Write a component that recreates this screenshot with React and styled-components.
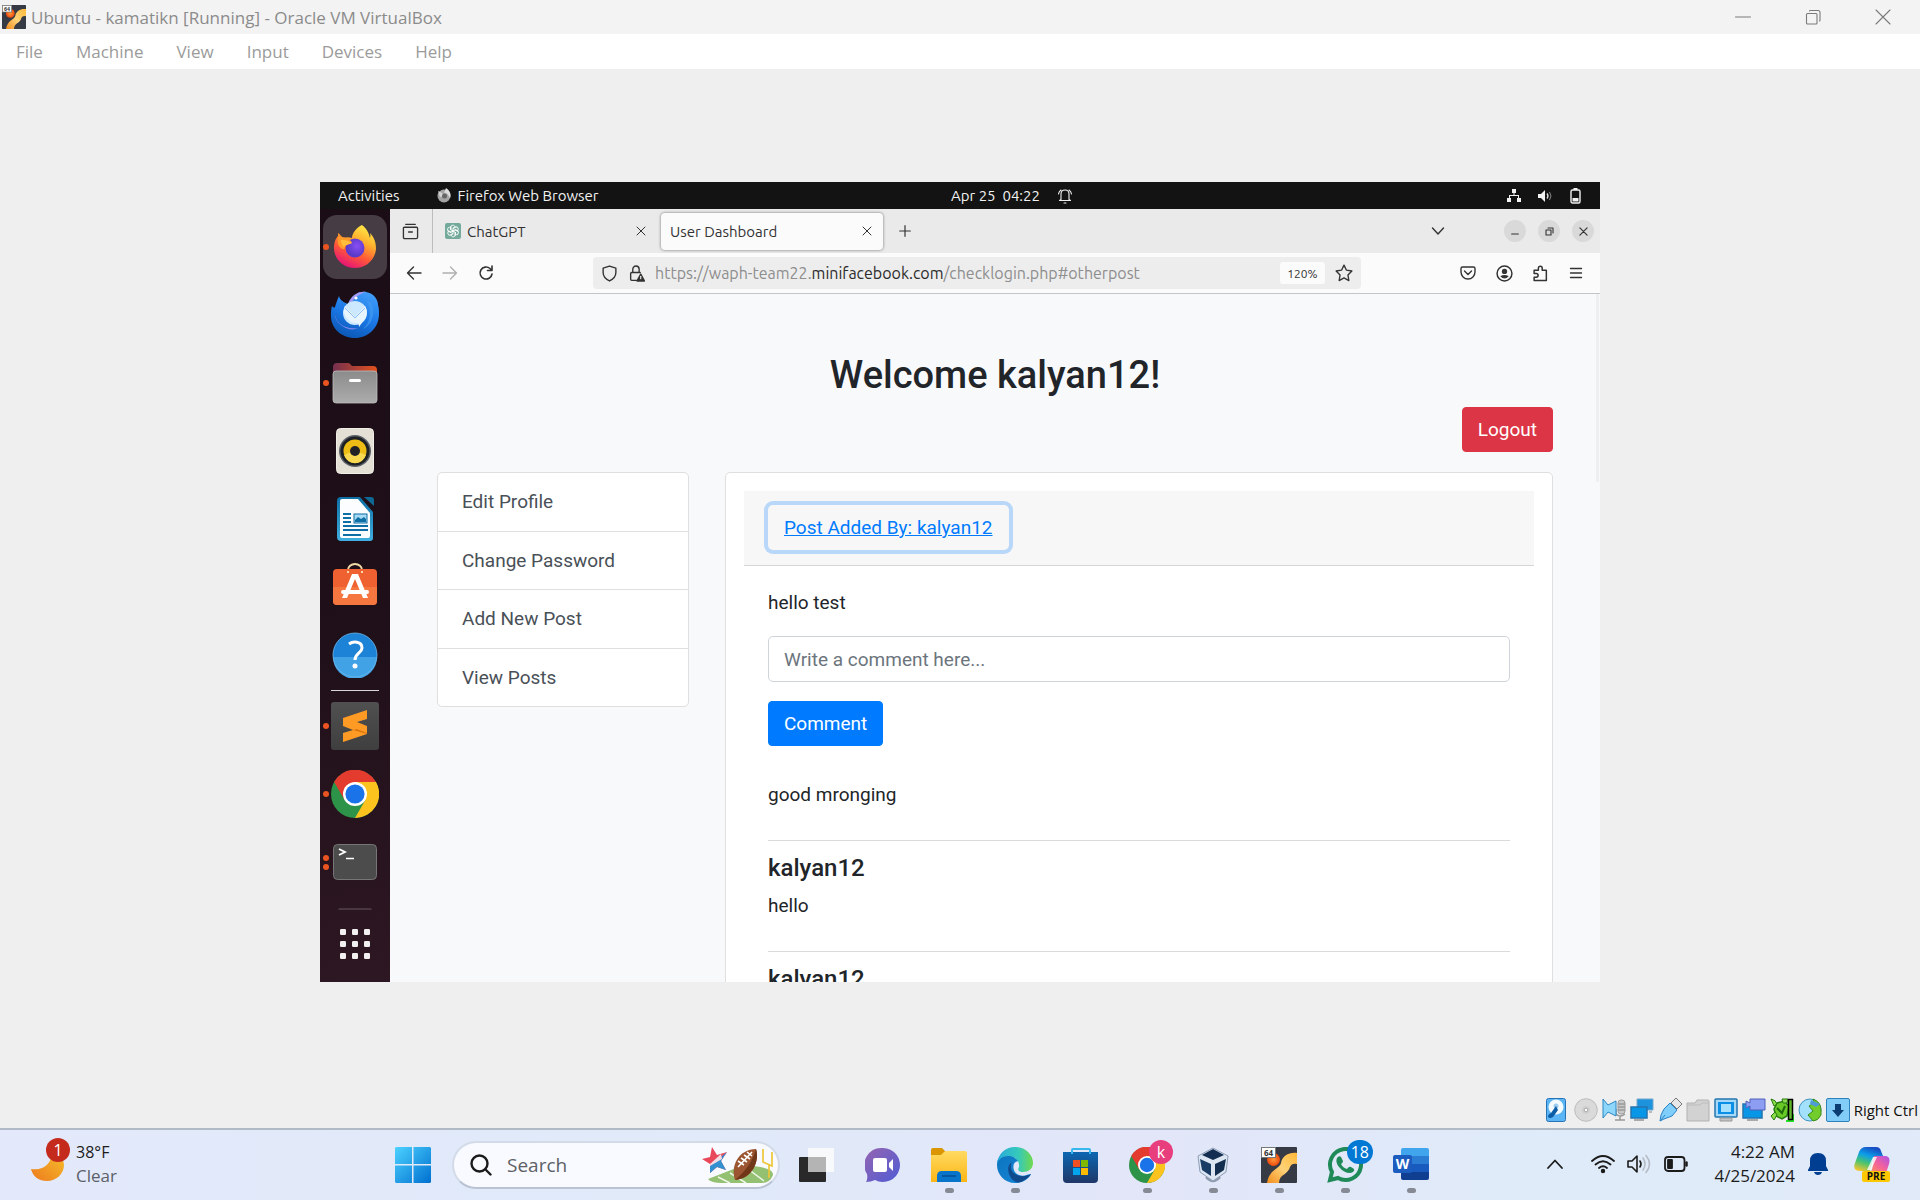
import React from "react";
import styled, { createGlobalStyle } from "styled-components";

const guestFont = `Ubuntu, "Noto Sans", "Open Sans", sans-serif`;
const hostFont = `"Segoe UI", "Open Sans", "Noto Sans", sans-serif`;

const GlobalStyle = createGlobalStyle`
  *, *::before, *::after { box-sizing: border-box; }
  body { margin: 0; font-family: ${hostFont}; background: #efefef; }
  button, input { font: inherit; }
  h2, h5, p, ul { margin: 0; padding: 0; }
  svg { display: block; flex: none; }
`;

const Desktop = styled.div`
  min-height: 100vh;
  display: flex;
  flex-direction: column;
`;

/* ---------- host window ---------- */
const TitleBar = styled.header`
  display: flex;
  align-items: center;
  height: 34px;
  padding: 0 2px;
  background: #f3f3f3;
`;
const WindowTitle = styled.span`
  margin-left: 5px;
  font-size: 17px;
  color: #8b8b8b;
`;
const WindowButtons = styled.div`
  display: flex;
  margin-left: auto;
`;
const WindowButton = styled.button`
  display: flex;
  align-items: center;
  justify-content: center;
  width: 70px;
  height: 34px;
  padding: 0;
  border: 0;
  background: none;
  color: #7a7a7a;
`;
const MenuBar = styled.nav`
  display: flex;
  align-items: center;
  gap: 33px;
  height: 35px;
  padding-left: 16px;
  background: #fff;
`;
const MenuItem = styled.button`
  padding: 0;
  border: 0;
  background: none;
  font-size: 17px;
  color: #9b9b9b;
`;
const Workspace = styled.main`
  flex: 1;
  display: flex;
  align-items: center;
  justify-content: center;
`;
const StatusBar = styled.footer`
  display: flex;
  align-items: center;
  justify-content: flex-end;
  gap: 4px;
  height: 33px;
  padding: 0 2px 3px 0;
  font-size: 15px;
  color: #111;
`;

/* ---------- guest desktop ---------- */
const Guest = styled.section`
  display: flex;
  flex-direction: column;
  width: min(100%, 1280px);
  aspect-ratio: 16 / 10;
  overflow: hidden;
  background: #1c0e17;
  font-family: ${guestFont};
`;
const GuestBar = styled.div`
  flex: none;
  display: grid;
  grid-template-columns: 1fr auto 1fr;
  align-items: center;
  height: 27px;
  background: #131313;
  color: #f2f2f2;
  font-size: 15px;
`;
const GuestBarGroup = styled.div`
  display: flex;
  align-items: center;
  gap: ${(p) => p.$gap}px;
  padding: ${(p) => p.$pad || "0"};
  justify-content: ${(p) => (p.$end ? "flex-end" : "flex-start")};
`;
const Activities = styled.button`
  padding: 0;
  border: 0;
  background: none;
  color: inherit;
  margin-right: 30px;
`;
const GuestBody = styled.div`
  flex: 1;
  min-height: 0;
  display: flex;
`;
const Dock = styled.aside`
  flex: none;
  display: flex;
  flex-direction: column;
  align-items: center;
  width: 70px;
  padding-top: 4px;
  background: linear-gradient(170deg, #1b0d15 0%, #1e0f18 50%, #2d1722 100%);
`;
const DockItem = styled.button`
  position: relative;
  display: flex;
  align-items: center;
  justify-content: center;
  width: 64px;
  height: 64px;
  margin: 2px 0;
  padding: 0;
  border: 0;
  border-radius: 14px;
  background: ${(p) => (p.$active ? "#463c43" : "transparent")};
`;
const RunningDots = styled.span`
  position: absolute;
  left: 0;
  display: grid;
  gap: 3px;
  i {
    width: 6px;
    height: 6px;
    border-radius: 50%;
    background: #e95420;
  }
`;
const DockRule = styled.div`
  width: 48px;
  height: 1px;
  margin: 1px 0;
  background: #d8d5d7;
`;
const DockEdge = styled.div`
  width: 34px;
  height: 2px;
  margin: 12px 0 0;
  border-radius: 2px 2px 0 0;
  background: #48373f;
`;

/* ---------- browser ---------- */
const Browser = styled.div`
  flex: 1;
  min-width: 0;
  display: flex;
  flex-direction: column;
  background: #f9fafb;
  color: #333;
`;
const TabStrip = styled.div`
  flex: none;
  display: flex;
  align-items: center;
  height: 44px;
  padding-right: 6px;
  background: #eaeaea;
  font-size: 15px;
`;
const ViewButton = styled.button`
  display: flex;
  align-items: center;
  justify-content: center;
  width: 43px;
  height: 44px;
  padding: 0 2px 0 0;
  border: 0;
  border-right: 1px solid #bdbdbd;
  background: none;
  color: #333;
`;
const Tab = styled.div`
  display: flex;
  align-items: center;
  gap: 6px;
  width: ${(p) => (p.$active ? 222 : 224)}px;
  height: 37px;
  margin-right: 4px;
  padding: 0 4px 0 ${(p) => (p.$active ? 9 : 12)}px;
  border-radius: 4px;
  background: ${(p) => (p.$active ? "#fbfbfb" : "transparent")};
  box-shadow: ${(p) => (p.$active ? "0 0 3px #0008" : "none")};
`;
const TabTitle = styled.span`
  flex: 1;
`;
const IconButton = styled.button`
  display: flex;
  align-items: center;
  justify-content: center;
  width: ${(p) => p.$size || 36}px;
  height: 24px;
  padding: 0;
  border: 0;
  background: none;
  color: ${(p) => (p.$muted ? "#b0b0b0" : "#333")};
`;
const TabActions = styled.div`
  display: flex;
  align-items: center;
  gap: 48px;
  margin-left: auto;
`;
const WindowControls = styled.div`
  display: flex;
  gap: 12px;
`;
const RoundButton = styled.button`
  display: flex;
  align-items: center;
  justify-content: center;
  width: 22px;
  height: 22px;
  padding: 0;
  border: 0;
  border-radius: 50%;
  background: #d9d9d9;
  color: #333;
`;
const NavBar = styled.div`
  flex: none;
  display: flex;
  align-items: center;
  height: 41px;
  padding: 0 6px;
  background: #fbfbfb;
  border-bottom: 1px solid #c3c5c8;
`;
const UrlBar = styled.div`
  flex: 1;
  display: flex;
  align-items: center;
  gap: 10px;
  height: 32px;
  margin: 0 89px;
  padding: 0 8px;
  border-radius: 4px;
  background: #ededed;
  font-size: 16px;
  color: #333;
`;
const UrlText = styled.span`
  flex: 1;
  color: #8e8e8e;
  white-space: nowrap;
  b { font-weight: 400; color: #2b2b2b; }
`;
const ZoomLevel = styled.button`
  width: 45px;
  height: 22px;
  padding: 0;
  border: 0;
  border-radius: 3px;
  background: #fbfbfb;
  color: #333;
  font-size: 12px;
`;

/* ---------- web page ---------- */
const Viewport = styled.div`
  position: relative;
  flex: 1;
  min-height: 0;
  overflow: hidden;
  padding: 58px 47px 0;
  background: #f8f9fb;
  color: #212529;
  font: 400 19px/29px Roboto, sans-serif;
`;
const ScrollThumb = styled.span`
  position: absolute;
  top: 0;
  right: 1px;
  width: 3px;
  height: 188px;
  border-radius: 0 0 2px 2px;
  background: #eeeff1;
`;
const Heading = styled.h2`
  font-size: 38px;
  line-height: 46px;
  font-weight: 500;
  text-align: center;
`;
const Actions = styled.div`
  display: flex;
  justify-content: flex-end;
  margin: 9px 0 20px;
`;
const Button = styled.button`
  height: 45px;
  padding: 0 15px;
  border: 1px solid ${(p) => p.$color};
  border-radius: 4px;
  background: ${(p) => p.$color};
  color: #fff;
  line-height: 29px;
`;
const Columns = styled.div`
  display: flex;
  align-items: flex-start;
  gap: 36px;
`;
const SideList = styled.nav`
  flex: none;
  display: flex;
  flex-direction: column;
  width: 252px;
  height: 235px;
  border: 1px solid #dfdfdf;
  border-radius: 5px;
  background: #fff;
`;
const SideLink = styled.a`
  flex: 1;
  display: flex;
  align-items: center;
  padding: 0 24px;
  color: #495057;
  text-decoration: none;
  & + & { border-top: 1px solid #dfdfdf; }
`;
const Card = styled.article`
  flex: 1;
  min-width: 0;
  padding: 18px;
  border: 1px solid #dfdfdf;
  border-radius: 5px;
  background: #fff;
`;
const CardHeader = styled.div`
  padding: 14px 24px 15px;
  border-bottom: 1px solid #d5d6d8;
  background: #f7f7f7;
`;
const PostLink = styled.button`
  display: block;
  height: 45px;
  padding: 0 16px;
  border: 0;
  border-radius: 5px;
  background: transparent;
  box-shadow: 0 0 0 4px #b8d7f9;
  color: #007bff;
  line-height: 29px;
  text-decoration: underline;
`;
const CardBody = styled.div`
  padding: 22px 24px;
`;
const CommentForm = styled.form`
  margin: 19px 0 34px;
`;
const CommentInput = styled.input`
  display: block;
  width: 100%;
  height: 46px;
  margin-bottom: 19px;
  padding: 0 15px;
  border: 1px solid #ced4da;
  border-radius: 5px;
  background: #fff;
  color: #495057;
  &::placeholder { color: #6c757d; opacity: 1; }
`;
const Comment = styled.div`
  margin-top: 31px;
  padding-top: 13px;
  border-top: 1px solid #d9dadb;
`;
const Author = styled.h5`
  margin-bottom: 8px;
  font-size: 24px;
  line-height: 29px;
  font-weight: 500;
`;

/* ---------- host task bar ---------- */
const TaskBar = styled.footer`
  display: flex;
  align-items: center;
  height: 72px;
  border-top: 2px solid #b0b9c6;
  background: linear-gradient(90deg, #e3e9fa 0%, #e0eaf9 35%, #e2e6f8 60%, #dfebf9 80%, #e0eaf8 100%);
  color: #1b1b1b;
  font-size: 17px;
`;
const Weather = styled.button`
  display: flex;
  align-items: center;
  gap: 12px;
  width: 20%;
  padding: 0 0 2px 30px;
  border: 0;
  background: none;
  color: #1b1b1b;
  font-size: 16px;
  line-height: 24px;
  text-align: left;
`;
const WeatherText = styled.span`
  display: grid;
  small { font-size: 17px; color: #5c6068; }
`;
const IconWithBadge = styled.span`
  position: relative;
  display: block;
`;
const Badge = styled.span`
  position: absolute;
  top: ${(p) => p.$top}px;
  right: ${(p) => p.$right}px;
  min-width: 24px;
  height: 24px;
  padding: 0 4px;
  border-radius: 12px;
  background: ${(p) => p.$color};
  color: #fff;
  font-size: 16px;
  line-height: 24px;
  text-align: center;
`;
const StartButton = styled.button`
  width: 60px;
  padding: 0 0 0 11px;
  border: 0;
  background: none;
`;
const SearchBox = styled.label`
  display: flex;
  align-items: center;
  width: 328px;
  height: 48px;
  margin: 0 4px 0 8px;
  padding: 0 4px 0 16px;
  border: 2px solid #d3dbe9;
  border-bottom-color: #bac3d3;
  border-radius: 24px;
  background: #f8faff;
`;
const SearchInput = styled.input`
  flex: 1;
  min-width: 0;
  margin-left: 15px;
  padding: 0;
  border: 0;
  outline: 0;
  background: none;
  font-size: 19px;
  &::placeholder { color: #5d6066; opacity: 1; }
`;
const TaskItem = styled.button`
  position: relative;
  display: flex;
  align-items: center;
  justify-content: center;
  width: 66px;
  height: 70px;
  padding: 0;
  border: 0;
  background: none;
  &::after {
    content: "";
    display: ${(p) => (p.$running ? "block" : "none")};
    position: absolute;
    bottom: 7px;
    width: 9px;
    height: 5px;
    border-radius: 3px;
    background: #858a94;
  }
`;
const Tray = styled.div`
  display: flex;
  align-items: center;
  margin-left: auto;
  padding: 0 7px 2px 0;
`;
const TrayButton = styled.button`
  display: flex;
  align-items: center;
  justify-content: center;
  width: ${(p) => p.$width}px;
  height: 48px;
  padding: 0;
  border: 0;
  background: none;
  color: #1b1b1b;
`;
const Clock = styled.time`
  width: 101px;
  margin-right: 10px;
  line-height: 24px;
  text-align: right;
  white-space: pre-line;
`;

/* ---------- drawings ---------- */
const Line = ({ size = 18, d, w = 1.4, children, box = 18 }) => (
  <svg width={size} height={size} viewBox={`0 0 ${box} ${box}`} fill="none" stroke="currentColor" strokeWidth={w} strokeLinecap="round" strokeLinejoin="round">
    {d && <path d={d} />}
    {children}
  </svg>
);

const VmLogo = ({ size }) => (
  <svg width={size} height={size} viewBox="0 0 36 36">
    <defs>
      <linearGradient id="vmGold" x1="1" y1="0" x2="0" y2="1"><stop stopColor="#ffb838" /><stop offset=".5" stopColor="#ffd277" /><stop offset="1" stopColor="#f38d1c" /></linearGradient>
      <radialGradient id="vmBall"><stop stopColor="#ff9a3c" /><stop offset="1" stopColor="#ef4a0c" /></radialGradient>
    </defs>
    <rect width="36" height="36" rx="1" fill="#363a45" />
    <circle cx="12.5" cy="12.5" r="6.5" fill="url(#vmBall)" />
    <path d="M36 6C28 5 21 9 20 16C19 22 8 22 6 36H18C18 27 27 28 29 20C30 17 33 16 36 17Z" fill="url(#vmGold)" />
    <rect x=".5" y=".5" width="14" height="10" fill="#fff" stroke="#777" />
    <text x="7.5" y="8.5" fontSize="8" fontWeight="700" fontFamily="Noto Sans, sans-serif" textAnchor="middle" fill="#333">64</text>
  </svg>
);

const Firefox = () => (
  <svg width="44" height="44" viewBox="0 0 44 44">
    <defs>
      <linearGradient id="ffBody" x1=".8" y1="0" x2=".3" y2="1"><stop stopColor="#fff04a" /><stop offset=".35" stopColor="#ffb02e" /><stop offset=".65" stopColor="#ff5a36" /><stop offset="1" stopColor="#e3107c" /></linearGradient>
      <radialGradient id="ffGlobe" cx=".6" cy=".4"><stop stopColor="#8a4df5" /><stop offset="1" stopColor="#5a3bc9" /></radialGradient>
    </defs>
    <path d="M29 0C35 5 36 9 37 13C38 10 37 9 37 8C42 13 43 19 43 24C42 35 33 43 22 43C10 43 1 34 1 23C1 17 3 13 5 11V8C7 9 8 11 10 13C13 12 16 12 19 13C19 8 24 2 29 0Z" fill="url(#ffBody)" />
    <circle cx="22" cy="23" r="9.5" fill="url(#ffGlobe)" />
    <path d="M5 12C8 11 13 12 18 16L19 18C16 20 13 19 12 22C12 26 8 24 6 21C4 18 5 15 5 12Z" fill="#ff9b2a" />
    <path d="M8 15C13 14 16 17 19 18C15 20 13 19 11 22C9 20 8 18 8 15Z" fill="#ffbd3b" />
  </svg>
);

const Thunderbird = () => (
  <svg width="48" height="48" viewBox="0 0 48 48">
    <defs>
      <linearGradient id="tbBody" x1=".7" y1="0" x2=".3" y2="1"><stop stopColor="#3f9cf8" /><stop offset=".5" stopColor="#1b78e6" /><stop offset="1" stopColor="#0b56b4" /></linearGradient>
    </defs>
    <path d="M8 5C9 9 12 11 17 13C20 5 27 0 35 1C43 2 47 9 47 14C48 17 48 20 48 23C48 37 37 47 24 47C10 47 0 37 0 25C0 21 0 18 1 15C3 17 3 17 4 16C5 13 6 9 8 5Z" fill="url(#tbBody)" />
    <path d="M17 13C20 5 27 0 35 1C29 2 22 8 18 15Z" fill="#a69af5" />
    <path d="M3 20C4 32 14 39 27 37C20 41 8 36 4 26Z" fill="#8488eb" />
    <circle cx="24" cy="22" r="12" fill="#cbe8ff" />
    <path d="M14 15L24 26L34 15Q37 20 35 26L28 36Q28 31 24 32C18 31 12 25 13 18Z" fill="#e8f5ff" />
    <path d="M14 17L24 27L34 17" fill="none" stroke="#8cbdf3" />
    <circle cx="25" cy="7" r="1.6" fill="#fff" />
    <path d="M36 11C40 18 41 30 32 38C42 34 45 20 40 11Z" fill="#459cf4" opacity=".6" />
  </svg>
);

const Files = () => (
  <svg width="46" height="42" viewBox="0 0 46 42">
    <defs><linearGradient id="fiTop"><stop stopColor="#74304f" /><stop offset="1" stopColor="#e2521e" /></linearGradient>
      <linearGradient id="fiBody" x1="0" y1="0" x2="0" y2="1"><stop stopColor="#8b8b8b" /><stop offset="1" stopColor="#acacac" /></linearGradient></defs>
    <path d="M1 5Q1 1 5 1H16Q18 1 19 3L20 4H41Q45 4 45 8V20H1Z" fill="url(#fiTop)" />
    <rect x="1" y="9" width="44" height="32" rx="3" fill="url(#fiBody)" stroke="#bcbcbc" strokeWidth=".8" />
    <rect x="17" y="17" width="12" height="3" rx="1.5" fill="#fff" />
  </svg>
);

const Rhythmbox = () => (
  <svg width="38" height="46" viewBox="0 0 38 46">
    <rect x=".5" y=".5" width="37" height="45" rx="4" fill="#e4e0d6" stroke="#f1eee7" />
    <circle cx="19" cy="23" r="16" fill="#5c6068" /><circle cx="19" cy="23" r="14.5" fill="#1d2024" />
    <circle cx="19" cy="23" r="11.5" fill="#edbd16" /><path d="M8 27A11.5 11.5 0 0 0 30 27Q19 21 8 27Z" fill="#f7d850" />
    <circle cx="19" cy="23" r="5" fill="#202226" />
  </svg>
);

const Writer = () => (
  <svg width="38" height="46" viewBox="0 0 38 46">
    <defs><linearGradient id="wrBlue" x1="0" y1="0" x2="0" y2="1"><stop stopColor="#0d6fa4" /><stop offset="1" stopColor="#41aee0" /></linearGradient></defs>
    <path d="M5 1H24L37 16V42Q37 45 34 45H5Q1 45 1 41V5Q1 1 5 1Z" fill="url(#wrBlue)" />
    <path d="M28 1H35Q38 1 38 4V10Z" fill="#0f6793" />
    <path d="M6 3H22L34 17V40Q34 42 32 42H6Q4 42 4 40V5Q4 3 6 3Z" fill="#fbfdff" />
    <path d="M7 18H15M7 22H15M7 26H15M7 30H32M7 34H32M7 39H25" stroke="#0d6fa4" strokeWidth="2" />
    <rect x="18" y="18" width="13" height="9" fill="#a8dcf6" stroke="#0d6fa4" /><path d="M19 26V24L22 21L25 23L28 21L30 23V26Z" fill="#0d6fa4" />
  </svg>
);

const Software = () => (
  <svg width="46" height="48" viewBox="0 0 46 48">
    <path d="M16 8V7A7 6 0 0 1 30 7V8" fill="none" stroke="#f1d9a8" strokeWidth="2" />
    <rect x="1" y="6" width="44" height="36" rx="4" fill="#ef6130" /><path d="M1 24H45V38Q45 42 41 42H5Q1 42 1 38Z" fill="#f5773f" />
    <path d="M20 11H26L36 35H31L23 16L15 35H10Z" fill="#fff" /><rect x="9" y="27" width="28" height="4" rx="2" fill="#fff" />
    <path d="M16 8V10M30 8V10" stroke="#f1d9a8" strokeWidth="2" />
  </svg>
);

const HelpIcon = () => (
  <svg width="46" height="46" viewBox="0 0 46 46">
    <circle cx="23" cy="23" r="22" fill="#1d83d6" /><path d="M1 25A22 22 0 0 0 45 25Z" fill="#42a2e6" />
    <circle cx="23" cy="23" r="22" fill="none" stroke="#6bb9ee" strokeWidth=".8" />
    <path d="M17 12C21 9 30 9 30 16C30 21 23 21 23 28" fill="none" stroke="#fff" strokeWidth="3" /><circle cx="23" cy="34" r="2.5" fill="#fff" />
  </svg>
);

const Sublime = () => (
  <svg width="48" height="48" viewBox="0 0 48 48">
    <defs><linearGradient id="suBg" x1="0" y1="0" x2="0" y2="1"><stop stopColor="#505050" /><stop offset="1" stopColor="#3f3f3f" /></linearGradient></defs>
    <rect width="48" height="48" rx="3" fill="url(#suBg)" />
    <path d="M12 16L36 8V17L26 20L36 24V32L12 40V31L22 28L12 24Z" fill="#ff9b24" />
    <path d="M22 28L36 32V31L26 27Z" fill="#d9770d" />
  </svg>
);

const Chrome = ({ size }) => (
  <svg width={size} height={size} viewBox="0 0 48 48">
    <circle cx="24" cy="24" r="24" fill="#2d9348" />
    <path d="M24 24L3 12A24 24 0 0 1 45 12Z" fill="#e33b2e" /><path d="M24 12H45A24 24 0 0 1 24 48L34.4 30Z" fill="#fcc31e" />
    <path d="M3.2 12L13.6 30L24 12Z" fill="#e33b2e" />
    <circle cx="24" cy="24" r="12" fill="#fff" /><circle cx="24" cy="24" r="9.6" fill="#1a73e8" />
  </svg>
);

const TerminalIcon = () => (
  <svg width="44" height="36" viewBox="0 0 44 36">
    <rect x=".5" y=".5" width="43" height="35" rx="4" fill="#4c4c4c" stroke="#767676" />
    <path d="M6 5L12 8L6 11" fill="none" stroke="#fff" strokeWidth="1.8" /><path d="M13 14.5H21" stroke="#fff" strokeWidth="1.5" />
  </svg>
);

const AppGrid = () => (
  <svg width="30" height="30" viewBox="0 0 30 30" fill="#f2f0f1">
    {[0, 12, 24].map((y) => [0, 12, 24].map((x) => <rect key={x + "-" + y} x={x} y={y} width="6" height="6" rx="1.2" />))}
  </svg>
);

const OpenAi = () => (
  <svg width="16" height="16" viewBox="0 0 16 16">
    <rect width="16" height="16" rx="2" fill="#74aa9c" />
    <g fill="none" stroke="#fff" strokeWidth=".9">
      {[0, 60, 120, 180, 240, 300].map((a) => <path key={a} transform={`rotate(${a} 8 8)`} d="M5.5 7V4.4A2.3 2.3 0 0 1 9.800 3.4L10.4 4.3L8 5.7V8" />)}
    </g>
  </svg>
);

const NetIcon = () => (
  <svg width="14" height="14" viewBox="0 0 14 14" fill="#f2f2f2"><path d="M5 0H9V4H7.5V6H12V9H14V13H10V9H11V7H3V9H4V13H0V9H2V6H6.5V4H5Z" /></svg>
);
const VolumeGuest = () => (
  <svg width="15" height="14" viewBox="0 0 15 14"><path d="M0 5H3L7 1V13L3 9H0Z" fill="#f2f2f2" /><path d="M9 4.5Q11 7 9 9.500" stroke="#ddd" fill="none" strokeWidth="1.3" /><path d="M11.5 3Q14.5 7 11.5 11" stroke="#888" fill="none" /></svg>
);
const BatteryGuest = () => (
  <svg width="11" height="16" viewBox="0 0 11 16"><rect x="1" y="2" width="9" height="13" rx="1.5" fill="none" stroke="#f2f2f2" strokeWidth="1.4" /><path d="M3.5 0H7.5V2H3.5ZM2.5 10H8.5V13.5H2.5Z" fill="#f2f2f2" /></svg>
);
const BellGuest = () => (
  <Line size={16} box={16} w={1.1}><path d="M4 11.5V6Q4 2 8 2Q12 2 12 6V11.5L13.5 12.5H2.5ZM7 15H9M1.5 6A6 6 0 0 1 4 2M14.5 6A6 6 0 0 0 12 2" /></Line>
);
const FoxMono = () => (
  <svg width="14" height="15" viewBox="0 0 14 15"><circle cx="7" cy="8" r="6.5" fill="#a5a5a5" /><path d="M9 0Q15 4 13 10Q10 4 7 5Z" fill="#dedede" /><path d="M1 3L5 5L7 8L3 9Z" fill="#d4d4d4" /><circle cx="7.5" cy="8" r="2.5" fill="#666" /></svg>
);

/* Indicators at the lower right of the machine window */
const Panel = ({ children }) => <svg width="24" height="24" viewBox="0 0 24 24">{children}</svg>;
const StatusIcons = () => (
  <>
    <Panel><rect x=".5" y=".5" width="19" height="23" rx="2" fill="#5bb5f4" stroke="#2773b8" /><circle cx="10" cy="9" r="7.5" fill="#f4fbff" /><circle cx="10" cy="8" r="2.5" fill="#9ccdf0" /><path d="M10 8L12 12L7 19Q4 21 2 19Q2 16 5 15Z" fill="#0d5ca6" /></Panel>
    <Panel><circle cx="12" cy="12" r="11.3" fill="#dadada" stroke="#bcbcbc" /><circle cx="12" cy="12" r="4" fill="#cfcfcf" /><circle cx="12" cy="12" r="1.8" fill="#fff" stroke="#aaa" /></Panel>
    <Panel><rect x="16" y="2" width="7" height="14" rx="3" fill="#c9c9c9" stroke="#9b9b9b" /><path d="M16 6H23M16 9H23M16 12H23M14 11V16Q18 20 23 16M18 18V22M13 22H23" stroke="#999" strokeWidth="1.5" fill="none" /><path d="M1 1L6 7L14 3V18L6 14L1 20Z" fill="#8ed6fa" stroke="#2b86c4" /></Panel>
    <Panel><path d="M7 1H23V12H7Z" fill="#1d93dd" stroke="#75a9cb" /><path d="M19 13H22V15H19Z" fill="#bbb" /><path d="M1 9H17V20H1Z" fill="#0897e6" stroke="#2474ae" strokeWidth="1.5" /><path d="M4 21H14V23H4Z" fill="#aaa" /></Panel>
    <Panel><path d="M13 5L18 0L24 6L19 11Z" fill="#e8e8e8" stroke="#777" /><path d="M12 5L19 12L14 18L6 21L2 23L3 17L6 11Z" fill="#7fcefb" stroke="#2c83c3" /><path d="M2 23L7 17" stroke="#2c83c3" /></Panel>
    <Panel><path d="M1 5H9L11 2H22Q23 2 23 4V23H1Z" fill="#d2d2d2" stroke="#b1b1b1" /><path d="M1 7H14L16 5H23" stroke="#bdbdbd" fill="none" /></Panel>
    <Panel><rect x="1" y="1" width="22" height="18" rx="1" fill="#a6d9f8" stroke="#2474ae" strokeWidth="1.5" /><rect x="4" y="4" width="16" height="12" fill="#0b8fe6" /><rect x="7" y="6" width="10" height="8" fill="#a6e0ff" /><path d="M6 20H18V23H6Z" fill="#c4c4c4" stroke="#999" /></Panel>
    <Panel><path d="M1 6H20V20H1Z" fill="#0897e6" stroke="#2474ae" strokeWidth="1.5" /><path d="M5 21H16V23H5Z" fill="#aaa" /><path d="M4 3L8 5V1H23V12H8V8L4 10Z" fill="#8d9ef2" stroke="#5261ba" /></Panel>
    <Panel><path d="M7 5L14 3L19 8L17 18L12 21L6 18L4 11Z" fill="#69c927" stroke="#267a12" strokeWidth="1.5" /><path d="M1 1Q6 2 7 6L4 8ZM1 18L5 14L7 17L4 22ZM12 1H18L17 5H13Z" fill="#8cdc4b" stroke="#267a12" /><path d="M7 10L12 15L15 8" fill="none" stroke="#1e6a0d" strokeWidth="2" /><path d="M22 16H24V24H16V22H22Z" fill="#25e325" /><path d="M18.5 1.5H22.5V21.5H18.5Z" fill="#63b52b" stroke="#000" strokeWidth="1.5" /></Panel>
    <Panel><circle cx="12" cy="12" r="11" fill="#a3e0fc" stroke="#3f93c5" /><path d="M15 1Q23 4 23 12V17Q20 23 15 23L10 17L15 13L11 8L16 5Z" fill="#72cc2b" stroke="#3a8b1c" /><path d="M13 2L22 6L18 9L12 6Z" fill="#4f9bd5" /></Panel>
    <Panel><rect x=".5" y=".5" width="23" height="23" rx="1.500" fill="#82cdf8" stroke="#2d82bd" /><path d="M9 6H15V12H18L12 19L6 12H9Z" fill="#0b3d72" /></Panel>
  </>
);

const Moon = () => (
  <svg width="34" height="34" viewBox="0 0 34 34"><defs><linearGradient id="moon" x1="1" y1="0" x2="0" y2="1"><stop stopColor="#f5bf2c" /><stop offset="1" stopColor="#ee7a1d" /></linearGradient></defs><path d="M1 22C14 24 22 16 22 5C29 7 34 12 34 18C34 27 26 34 17 34C9 34 3 30 1 22Z" fill="url(#moon)" /></svg>
);
const WindowsLogo = () => (
  <svg width="36" height="36" viewBox="0 0 36 36"><defs><linearGradient id="win" x1="0" y1="0" x2="1" y2="1"><stop stopColor="#4cd2ff" /><stop offset="1" stopColor="#006fd0" /></linearGradient></defs><path d="M1 0H17V17H0V1ZM18.5 0H35L36 1V17H18.5ZM0 18.5H17V36H1L0 35ZM18.5 18.5H36V35L35 36H18.5Z" fill="url(#win)" /></svg>
);
const SearchArt = () => (
  <svg width="72" height="38" viewBox="0 0 72 38">
    <path d="M6 33L42 19Q72 21 71 29Q68 37 60 37H20Q9 37 6 33Z" fill="#94c072" /><path d="M16 31L28 37M28 27L44 37M46 23L62 35" stroke="#eff7e9" strokeWidth="1.5" />
    <path d="M10 1L15 9L25 6L19 15L24 24L15 21L8 27V18L0 13L8 11Z" fill="#e8485a" /><path d="M25 6L19 15L24 24L15 21L8 27V20Z" fill="#3290d1" /><path d="M8 18L19 8L20 13L8 20Z" fill="#f3dce4" />
    <path d="M54 3C58 15 50 33 33 34C28 20 37 3 54 3Z" fill="#9b5530" /><path d="M54 3C58 15 50 33 33 34C45 24 51 14 54 3Z" fill="#713719" />
    <path d="M36 21L50 6M36 15L42 19M39 12L45 16M42 9L48 13M45 6L50 10" stroke="#fff" strokeWidth="1.6" />
    <path d="M61 3V16L70 20V6M67 18V32" stroke="#edc638" strokeWidth="1.7" fill="none" />
  </svg>
);
const TaskView = () => (
  <svg width="36" height="36" viewBox="0 0 36 36"><rect x="0" y="10" width="27" height="25" rx="1" fill="#292929" /><rect x="9" y="1" width="26" height="24" rx="1" fill="#fbfbfb" opacity=".9" /><path d="M9 10H27V25H9Z" fill="#b4b4b4" /></svg>
);
const ChatIcon = () => (
  <svg width="36" height="36" viewBox="0 0 36 36"><defs><linearGradient id="chat" x1="0" y1="0" x2="1" y2="1"><stop stopColor="#9665b0" /><stop offset="1" stopColor="#4f5bd5" /></linearGradient></defs><path d="M18 1A17 17 0 1 1 10 33Q6 35 1 35Q3 32 2 27A17 17 0 0 1 18 1Z" fill="url(#chat)" /><rect x="8" y="11" width="14" height="14" rx="2" fill="#fff" /><path d="M24 16L28 12V24L24 20Z" fill="#fff" /></svg>
);
const Explorer = () => (
  <svg width="36" height="36" viewBox="0 0 36 36"><defs><linearGradient id="exp" x1="0" y1="0" x2="0" y2="1"><stop stopColor="#ffda62" /><stop offset="1" stopColor="#fbb616" /></linearGradient></defs><path d="M0 3Q0 1 2 1H11L15 5V12H0Z" fill="#db9500" /><path d="M0 8H10L14 4H34Q36 4 36 6V35H0Z" fill="url(#exp)" /><path d="M6 35V29Q6 24 11 24H25Q30 24 30 29V35Z" fill="#0874ca" /><path d="M11 29H25" stroke="#064e91" strokeWidth="1.5" /></svg>
);
const Edge = () => (
  <svg width="36" height="36" viewBox="0 0 36 36"><defs><linearGradient id="edTop"><stop stopColor="#28a9db" /><stop offset=".6" stopColor="#36c9bb" /><stop offset="1" stopColor="#70d94c" /></linearGradient><linearGradient id="edSide" x1="0" y1="0" x2="1" y2="1"><stop stopColor="#0d73bd" /><stop offset="1" stopColor="#1688da" /></linearGradient></defs>
    <path d="M0 18C0 8 8 4 14 8L22 14C14 14 15 26 22 28C27 30 31 27 34 27C31 33 25 36 18 36C8 36 0 28 0 18Z" fill="url(#edSide)" />
    <path d="M0 17C1 7 8 0 18 0C29 0 36 8 36 16C36 22 31 25 26 25C22 25 20 23 22 20C23 13 17 9 11 9C5 9 1 13 0 17Z" fill="url(#edTop)" />
    <path d="M15 15C10 18 10 25 14 31C17 35 22 37 26 34C30 32 33 29 34 27C27 31 18 29 15 24C13 20 14 17 15 15Z" fill="#114a8c" />
  </svg>
);
const Store = () => (
  <svg width="36" height="36" viewBox="0 0 36 36"><defs><linearGradient id="store" x1="0" y1="0" x2="0" y2="1"><stop stopColor="#0c66b2" /><stop offset="1" stopColor="#203768" /></linearGradient></defs><path d="M9 8V3Q9 2 10 2H26Q27 2 27 3V8" fill="none" stroke="#36b8ef" strokeWidth="2" /><path d="M0 5H35V32Q35 36 31 36H4Q0 36 0 32Z" fill="url(#store)" /><path d="M9 5V7M27 5V7" stroke="#36b8ef" strokeWidth="2" /><path d="M10 13H17V20H10Z" fill="#f25022" /><path d="M18 13H25V20H18Z" fill="#7fba00" /><path d="M10 21H17V28H10Z" fill="#00a4ef" /><path d="M18 21H25V28H18Z" fill="#ffb900" /></svg>
);
const VBox = () => (
  <svg width="34" height="36" viewBox="0 0 34 36"><path d="M10 30Q17 38 24 30" fill="none" stroke="#8f9bae" strokeWidth="2.5" /><path d="M17 1L32 9L30 25L17 34L4 25L2 9Z" fill="#dce5f2" stroke="#8d9db6" /><path d="M17 2L28 8L17 13L6 8Z" fill="#132e50" /><path d="M4 12L15 17V29L6 23Z" fill="#193c65" /><path d="M30 12L19 17V29L28 23Z" fill="#142e50" /></svg>
);
const WhatsApp = () => (
  <svg width="36" height="36" viewBox="0 0 36 36"><path d="M3 33L5 25A15.5 15.5 0 1 1 11 31Z" fill="none" stroke="#1f8a58" strokeWidth="4" /><path d="M10 11Q12 8 14 10L16 14Q16 16 14 17Q16 21 20 22Q22 19 24 20L27 22Q28 25 23 26Q17 26 12 20Q8 15 10 11Z" fill="#1f8a58" /></svg>
);
const Word = () => (
  <svg width="36" height="34" viewBox="0 0 36 34"><path d="M8 2Q8 0 10 0H34Q36 0 36 2V8H8Z" fill="#41a5ee" /><path d="M8 8H36V16H8Z" fill="#2b7cd3" /><path d="M8 16H36V24H8Z" fill="#185abd" /><path d="M8 24H36V30Q36 32 34 32H10Q8 32 8 30Z" fill="#103f91" /><rect y="7" width="19" height="18" rx="2" fill="#1d5cbf" /><text x="9.5" y="21" textAnchor="middle" fontSize="14" fontWeight="700" fontFamily="Open Sans, sans-serif" fill="#fff">W</text></svg>
);
const Copilot = () => (
  <svg width="36" height="36" viewBox="0 0 36 36"><defs><linearGradient id="cpA" x1=".6" y1="0" x2=".2" y2="1"><stop stopColor="#174bc2" /><stop offset=".35" stopColor="#0c9ee9" /><stop offset=".65" stopColor="#48c46f" /><stop offset="1" stopColor="#f6c52d" /></linearGradient><linearGradient id="cpB" x1="1" y1="0" x2="0" y2="1"><stop stopColor="#ad51e8" /><stop offset=".5" stopColor="#f4629a" /><stop offset="1" stopColor="#ff9a51" /></linearGradient></defs>
    <path d="M12 1H22Q26 1 27 5L29 10H23Q20 10 19 14L16 25H7Q-2 25 1 17L5 6Q7 1 12 1Z" fill="url(#cpA)" /><path d="M20 10H31Q37 10 35 18L32 27H14L18 24Z" fill="url(#cpB)" /><path d="M19 11H23L17 24H13Z" fill="#fff" opacity=".8" />
    <rect x="8" y="25" width="28" height="11" rx="2" fill="#ffc800" /><text x="22" y="34" textAnchor="middle" fontSize="10" fontWeight="700" fontFamily="Open Sans, sans-serif" fill="#111">PRE</text></svg>
);

const dockTop = [
  ["Firefox", Firefox, 1, true],
  ["Thunderbird", Thunderbird],
  ["Files", Files, 1],
  ["Rhythmbox", Rhythmbox],
  ["Writer", Writer],
  ["Software", Software],
  ["Help", HelpIcon],
];
const DockChrome = () => <Chrome size={48} />;
const dockBottom = [
  ["Sublime Text", Sublime, 1],
  ["Chrome", DockChrome, 1],
  ["Terminal", TerminalIcon, 2],
];
const DockEntries = ({ items }) =>
  items.map(([name, Icon, running = 0, active]) => (
    <DockItem key={name} aria-label={name} $active={active}>
      <Icon />
      {running > 0 && <RunningDots>{Array.from({ length: running }, (_, i) => <i key={i} />)}</RunningDots>}
    </DockItem>
  ));

const Close = ({ size = 10, w = 1 }) => <Line size={size} box={10} w={w} d="M1 1L9 9M9 1L1 9" />;

function WebPage() {
  return (
    <Viewport>
      <Heading>Welcome kalyan12!</Heading>
      <Actions><Button $color="#dc3545">Logout</Button></Actions>
      <Columns>
        <SideList>
          {["Edit Profile", "Change Password", "Add New Post", "View Posts"].map((t) => <SideLink href="#" key={t}>{t}</SideLink>)}
        </SideList>
        <Card>
          <CardHeader><PostLink>Post Added By: kalyan12</PostLink></CardHeader>
          <CardBody>
            <p>hello test</p>
            <CommentForm onSubmit={(e) => e.preventDefault()}>
              <CommentInput aria-label="Comment" placeholder="Write a comment here..." />
              <Button $color="#007bff">Comment</Button>
            </CommentForm>
            <p>good mronging</p>
            <Comment><Author>kalyan12</Author><p>hello</p></Comment>
            <Comment><Author>kalyan12</Author></Comment>
          </CardBody>
        </Card>
      </Columns>
      <ScrollThumb />
    </Viewport>
  );
}

function BrowserWindow() {
  return (
    <Browser>
      <TabStrip>
        <ViewButton aria-label="Recent browsing"><Line size={17} d="M4 1.5H14M1.5 5.5Q1.5 4.5 2.5 4.5H15.5Q16.5 4.5 16.5 5.5V15Q16.5 16.5 15 16.5H3Q1.5 16.5 1.5 15ZM7 9.500H11" /></ViewButton>
        <Tab><OpenAi /><TabTitle>ChatGPT</TabTitle><IconButton $size={24} aria-label="Close ChatGPT"><Close /></IconButton></Tab>
        <Tab $active><TabTitle>User Dashboard</TabTitle><IconButton $size={24} aria-label="Close User Dashboard"><Close /></IconButton></Tab>
        <IconButton aria-label="New tab"><Line size={12} box={12} w={1.2} d="M6 .7V11.3M.7 6H11.3" /></IconButton>
        <TabActions>
          <IconButton aria-label="List tabs"><Line size={14} box={14} d="M1.5 4L7 10L12.5 4" /></IconButton>
          <WindowControls>
            <RoundButton aria-label="Minimize"><Line size={8} box={8} w={1.2} d="M.7 7H7.3" /></RoundButton>
            <RoundButton aria-label="Restore"><Line size={9} box={9} w={1.1} d="M1 3H6V8H1ZM3 1H8V6" /></RoundButton>
            <RoundButton aria-label="Close"><Close size={9} w={1.3} /></RoundButton>
          </WindowControls>
        </TabActions>
      </TabStrip>
      <NavBar>
        <IconButton aria-label="Back"><Line size={16} box={16} d="M15 8H1.5M7.5 2L1.5 8L7.5 14" /></IconButton>
        <IconButton $muted aria-label="Forward"><Line size={16} box={16} d="M1 8H14.5M8.5 2L14.5 8L8.5 14" /></IconButton>
        <IconButton aria-label="Reload"><Line size={16} box={16} w={1.6} d="M14 9A6 6 0 1 1 12 3.5L14 5.5M14 1V5.5H9.5" /></IconButton>
        <UrlBar>
          <Line size={17} box={16} w={1.3} d="M8 1L14 3V7Q14 12 8 15Q2 12 2 7V3Z" />
          <Line size={17} box={16} w={1.3}><path d="M4.5 7V4A3 3 0 0 1 10.5 4V7M8 14.5H3.5Q2.5 14.5 2.5 13.5V8Q2.5 7 3.5 7H11.5" /><path d="M12 8.5L15.5 15H8.5Z" fill="#333" stroke="#333" /><path d="M12 10.5V13" stroke="#fff" strokeWidth="1" /></Line>
          <UrlText>https://waph-team22.<b>minifacebook.com</b>/checklogin.php#otherpost</UrlText>
          <ZoomLevel>120%</ZoomLevel>
          <Line size={18} box={16} w={1.2} d="M8 1L10.2 5.5L15 6.2L11.5 9.7L12.3 14.7L8 12.4L3.7 14.7L4.5 9.7L1 6.2L5.8 5.5Z" />
        </UrlBar>
        <IconButton aria-label="Save to Pocket"><Line size={16} box={16} d="M2.5 2H13.5Q15 2 15 3.5V7A7 7 0 0 1 1 7V3.5Q1 2 2.5 2ZM4.5 6L8 9.5L11.5 6" /></IconButton>
        <IconButton aria-label="Account"><Line size={17} box={16} w={1.4}><circle cx="8" cy="8" r="7" /><circle cx="8" cy="6" r="2.5" fill="#333" stroke="none" /><path d="M4 10.5Q8 8.5 12 10.5Q8 15 4 10.5Z" fill="#333" stroke="none" /></Line></IconButton>
        <IconButton aria-label="Extensions"><Line size={17} box={16} d="M2 5H6V3A1.8 1.8 0 0 1 9.6 3V5H13.5V14.5H2V11.5H4A1.7 1.7 0 0 0 4 8H2Z" /></IconButton>
        <IconButton aria-label="Menu"><Line size={14} box={14} d="M1.5 2.5H12.5M1.5 7H12.5M1.5 11.5H12.5" /></IconButton>
      </NavBar>
      <WebPage />
    </Browser>
  );
}

export default function App() {
  return (
    <Desktop>
      <GlobalStyle />
      <TitleBar>
        <VmLogo size={24} />
        <WindowTitle>Ubuntu - kamatikn [Running] - Oracle VM VirtualBox</WindowTitle>
        <WindowButtons>
          <WindowButton aria-label="Minimize"><Line size={16} box={16} w={1.1} d="M.5 8H15.5" /></WindowButton>
          <WindowButton aria-label="Restore"><Line size={16} box={16} w={1.1} d="M2.5 4.5H11Q12 4.5 12 5.5V14Q12 15 11 15H2.5Q1.5 15 1.5 14V5.5Q1.5 4.5 2.5 4.5ZM4.5 2Q4.5 1.5 5.5 1.5H13Q15 1.5 15 3.5V11Q15 12 14.5 12" /></WindowButton>
          <WindowButton aria-label="Close"><Line size={16} box={16} w={1.1} d="M1 1L15 15M15 1L1 15" /></WindowButton>
        </WindowButtons>
      </TitleBar>
      <MenuBar>
        {["File", "Machine", "View", "Input", "Devices", "Help"].map((m) => <MenuItem key={m}>{m}</MenuItem>)}
      </MenuBar>
      <Workspace>
        <Guest>
          <GuestBar>
            <GuestBarGroup $gap={7} $pad="0 0 0 18px"><Activities>Activities</Activities><FoxMono /><span>Firefox Web Browser</span></GuestBarGroup>
            <GuestBarGroup $gap={17} $pad="0 0 0 104px"><span>Apr 25&nbsp; 04:22</span><BellGuest /></GuestBarGroup>
            <GuestBarGroup $gap={17} $pad="0 19px 0 0" $end><NetIcon /><VolumeGuest /><BatteryGuest /></GuestBarGroup>
          </GuestBar>
          <GuestBody>
            <Dock>
              <DockEntries items={dockTop} />
              <DockRule />
              <DockEntries items={dockBottom} />
              <DockEdge />
              <DockItem aria-label="Show applications"><AppGrid /></DockItem>
            </Dock>
            <BrowserWindow />
          </GuestBody>
        </Guest>
      </Workspace>
      <StatusBar><StatusIcons /><span>Right Ctrl</span></StatusBar>
      <TaskBar>
        <Weather>
          <IconWithBadge><Moon /><Badge $top={-9} $right={-6} $color="#c42b1c">1</Badge></IconWithBadge>
          <WeatherText>38°F<small>Clear</small></WeatherText>
        </Weather>
        <StartButton aria-label="Start"><WindowsLogo /></StartButton>
        <SearchBox>
          <Line size={22} box={22} w={2.4}><circle cx="9.5" cy="9.5" r="8" /><path d="M15.5 15.5L20.5 20.5" /></Line>
          <SearchInput type="search" aria-label="Search" placeholder="Search" />
          <SearchArt />
        </SearchBox>
        <TaskItem aria-label="Task view"><TaskView /></TaskItem>
        <TaskItem aria-label="Chat"><ChatIcon /></TaskItem>
        <TaskItem $running aria-label="File Explorer"><Explorer /></TaskItem>
        <TaskItem $running aria-label="Edge"><Edge /></TaskItem>
        <TaskItem aria-label="Store"><Store /></TaskItem>
        <TaskItem $running aria-label="Chrome"><IconWithBadge><Chrome size={36} /><Badge $top={-7} $right={-8} $color="#e83e7d">k</Badge></IconWithBadge></TaskItem>
        <TaskItem $running aria-label="VirtualBox"><VBox /></TaskItem>
        <TaskItem $running aria-label="Virtual machine"><VmLogo size={36} /></TaskItem>
        <TaskItem $running aria-label="WhatsApp"><IconWithBadge><WhatsApp /><Badge $top={-7} $right={-10} $color="#0078d4">18</Badge></IconWithBadge></TaskItem>
        <TaskItem $running aria-label="Word"><Word /></TaskItem>
        <Tray>
          <TrayButton $width={60} aria-label="Hidden icons"><Line size={16} box={16} w={1.8} d="M1 12L8 4.5L15 12" /></TrayButton>
          <TrayButton $width={36} aria-label="Wi-Fi"><Line size={24} box={24} w={1.8}><path d="M1 9Q12 -1 23 9M4.500 12.5Q12 6 19.5 12.5M8 16Q12 12.5 16 16" /><circle cx="12" cy="19" r="1.3" fill="currentColor" /></Line></TrayButton>
          <TrayButton $width={36} aria-label="Volume"><Line size={24} box={24} w={1.6}><path d="M1 9H5L10 4V20L5 15H1ZM13 9Q15 12 13 15" /><path d="M16 6Q20 12 16 18M19 3.5Q26 12 19 20.5" stroke="#b5bbc6" /></Line></TrayButton>
          <TrayButton $width={37} aria-label="Battery"><Line size={24} box={24} w={1.8}><rect x="1" y="5" width="19.5" height="14" rx="3" /><path d="M4 8H8V16H4Z" fill="currentColor" /><path d="M22.5 10.5V13.5" strokeWidth="2.5" /></Line></TrayButton>
          <Clock>{"4:22 AM\n4/25/2024"}</Clock>
          <TrayButton $width={26} aria-label="Notifications"><svg width="22" height="24" viewBox="0 0 22 24" fill="#003e92"><path d="M11 1Q19 1 19 9V14L21 18V19H1V18L3 14V9Q3 1 11 1ZM7 20H15Q14 23 11 23Q8 23 7 20Z" /></svg></TrayButton>
          <TrayButton $width={82} aria-label="Copilot"><Copilot /></TrayButton>
        </Tray>
      </TaskBar>
    </Desktop>
  );
}
